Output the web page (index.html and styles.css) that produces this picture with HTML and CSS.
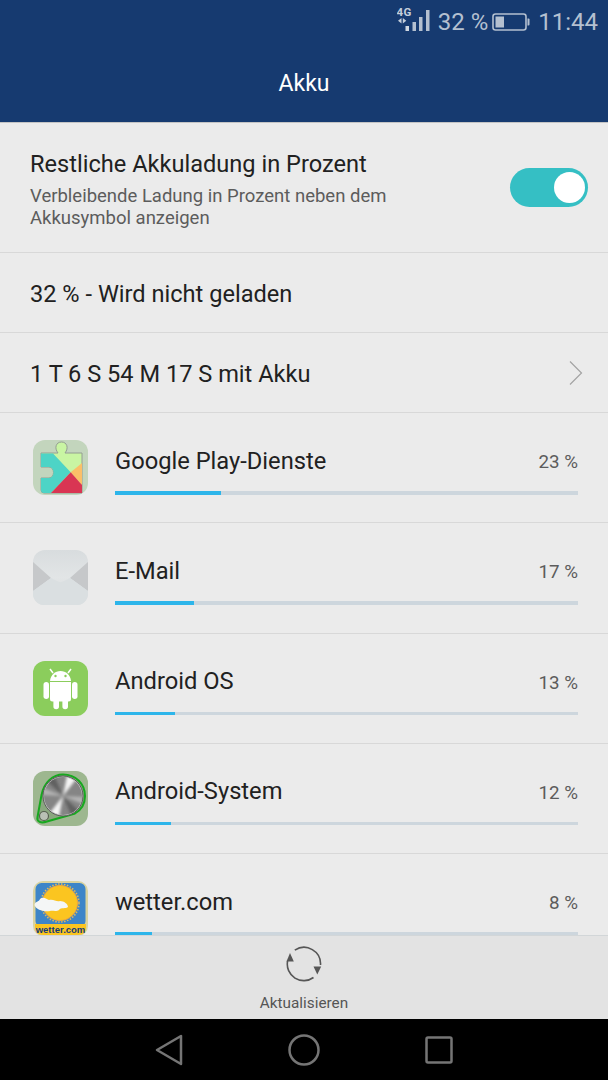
FILE: index.html
```html
<!DOCTYPE html>
<html lang="de">
<head>
<meta charset="utf-8">
<title>Akku</title>
<link rel="stylesheet" href="styles.css">
</head>
<body>
<div class="phone">
  <header class="header">
    <div class="status">
      <svg class="sig" width="34" height="32" viewBox="0 0 34 32">
        <text x="-0.500" y="9.500" class="net">4G</text>
        <path d="M4.500 12 1 14.700 4.500 17.400ZM5.800 12 9.300 14.700 5.800 17.400Z" fill="#c4cedb"/>
        <rect x="8.500" y="20" width="3.500" height="5" fill="#d0d8e2"/>
        <rect x="15.500" y="16" width="3.500" height="9" fill="#b4c0d0"/>
        <rect x="22" y="11" width="3.500" height="14" fill="#b4c0d0"/>
        <rect x="29" y="4" width="3.500" height="21" fill="#b4c0d0"/>
      </svg>
      <span class="pct">32 %</span>
      <svg class="bat" width="38" height="20" viewBox="0 0 38 20">
        <rect x="1" y="2" width="33" height="16" rx="2.500" fill="none" stroke="#b4c0d0" stroke-width="1.600"/>
        <rect x="3.500" y="4.500" width="8.500" height="11" fill="#b4c0d0"/>
        <path d="M35.500 6.500h1a1 1 0 0 1 1 1v5a1 1 0 0 1-1 1h-1Z" fill="#b4c0d0"/>
      </svg>
      <span class="time">11:44</span>
    </div>
    <h1 class="title">Akku</h1>
  </header>

  <main class="content">
    <section class="row row-toggle">
      <div class="toggle-text">
        <div class="main-label">Restliche Akkuladung in Prozent</div>
        <div class="sub-label">Verbleibende Ladung in Prozent neben dem<br>Akkusymbol anzeigen</div>
      </div>
      <div class="toggle"><span class="knob"></span></div>
    </section>
    <section class="row row-plain"><span class="main-label">32 % - Wird nicht geladen</span></section>
    <section class="row row-plain row-link">
      <span class="main-label">1 T 6 S 54 M 17 S mit Akku</span>
      <svg class="chevron" width="16" height="26" viewBox="0 0 16 26"><path d="M2 1.500 13.500 13 2 24.500" fill="none" stroke="#a3a3a3" stroke-width="1.200"/></svg>
    </section>

    <section class="app">
      <svg class="icon" viewBox="0 0 55 55">
        <rect width="55" height="55" rx="12" fill="#c3d5bd"/>
        <path d="M8 13H25C21 8 23 2 28.500 2 34 2 36 8 32 13H49V53H11Q8 53 8 50V38H16C22 38 22 27 16 27H8Z" fill="#c9f5a3" stroke="#949e92" stroke-width="1"/>
        <path d="M8 13.500H20L37.700 32.300 18 53H11Q8 53 8 50V38H16C22 38 22 27 16 27H8Z" fill="#4dd4c6"/>
        <path d="M37.700 32.300 49 23V45Z" fill="#fbbf68"/>
        <path d="M37.700 32.300 49 45V53H18Z" fill="#d93553"/>
      </svg>
      <div class="app-body">
        <div class="app-head"><span class="app-name">Google Play-Dienste</span><span class="app-pct">23 %</span></div>
        <div class="track"><div class="fill" style="width:23%"></div></div>
      </div>
    </section>

    <section class="app">
      <svg class="icon" viewBox="0 0 55 55">
        <defs><linearGradient id="mailg" x1="0" y1="0" x2="0" y2="1"><stop offset="0" stop-color="#d8dcde"/><stop offset=".5" stop-color="#e2e5e6"/><stop offset="1" stop-color="#d2d9dc"/></linearGradient></defs>
        <rect width="55" height="55" rx="12" fill="url(#mailg)"/>
        <path d="M0 12 18 28 0 41ZM55 12 37 28 55 41Z" fill="#c6c8ca"/>
        <path d="M18 28 24 31C26 32.500 29 32.500 31 31L37 28 55 41V44A11 11 0 0 1 44 55H11A11 11 0 0 1 0 44V41Z" fill="#dadfe1"/>
      </svg>
      <div class="app-body">
        <div class="app-head"><span class="app-name">E-Mail</span><span class="app-pct">17 %</span></div>
        <div class="track"><div class="fill" style="width:17%"></div></div>
      </div>
    </section>

    <section class="app">
      <svg class="icon" viewBox="0 0 55 55">
        <rect width="55" height="55" rx="12" fill="#8bcd5c"/>
        <path d="M17 20C17.500 14 22 10 27.500 10S37.500 14 38 20Z" fill="#fff"/>
        <path d="M20 12 17 8M35 12 38 8" stroke="#fff" stroke-width="1.500"/>
        <circle cx="22.500" cy="15" r="1.200" fill="#8bcd5c"/><circle cx="32.500" cy="15" r="1.200" fill="#8bcd5c"/>
        <path d="M17 21H38V38A2.500 2.500 0 0 1 35.500 40.500H35V45.500A2.800 2.800 0 0 1 29.400 45.500V40.500H26V45.500A2.800 2.800 0 0 1 20.400 45.500V40.500H19.500A2.500 2.500 0 0 1 17 38Z" fill="#fff"/>
        <rect x="10.500" y="21" width="5.500" height="17" rx="2.750" fill="#fff"/>
        <rect x="39" y="21" width="5.500" height="17" rx="2.750" fill="#fff"/>
      </svg>
      <div class="app-body">
        <div class="app-head"><span class="app-name">Android OS</span><span class="app-pct">13 %</span></div>
        <div class="track"><div class="fill" style="width:13%"></div></div>
      </div>
    </section>

    <section class="app">
      <svg class="icon" viewBox="0 0 55 55">
        <defs>
          <filter id="soft" x="-30%" y="-30%" width="160%" height="160%"><feGaussianBlur stdDeviation="1.600"/></filter>
          <clipPath id="disc"><circle cx="30" cy="25" r="19"/></clipPath>
        </defs>
        <rect width="55" height="55" rx="12" fill="#9db78f"/>
        <path d="M4.500 46 8.500 24C11 11 20 3.500 30 3.500 43 3.500 52 13 52 25 52 33 48 39 42 42.500L14 50.500C8 52.500 3.500 51 4.500 46Z" fill="#8aa77f" stroke="#17a81f" stroke-width="2"/>
        <circle cx="30" cy="25" r="20" fill="#c9cbc7" stroke="#5a5a5a" stroke-width="1"/>
        <g clip-path="url(#disc)">
          <rect x="10" y="5" width="40" height="40" fill="#858585"/>
          <g filter="url(#soft)">
            <path d="M30 25 34 4 44 7ZM30 25 26 46 16 43Z" fill="#f4f4f4"/>
            <path d="M30 25 52 26 50 33ZM30 25 9 24 10 17Z" fill="#b4b4b4"/>
            <path d="M30 25 14 10 22 6ZM30 25 46 40 38 44Z" fill="#606060"/>
          </g>
        </g>
        <circle cx="11" cy="45" r="4.500" fill="#b9c0b5" stroke="#56604f" stroke-width="1.200"/>
      </svg>
      <div class="app-body">
        <div class="app-head"><span class="app-name">Android-System</span><span class="app-pct">12 %</span></div>
        <div class="track"><div class="fill" style="width:12%"></div></div>
      </div>
    </section>

    <section class="app">
      <svg class="icon" viewBox="0 0 55 55">
        <rect width="55" height="55" rx="10" fill="#d9d3a0"/>
        <rect x="2.500" y="2" width="50" height="44" rx="6" fill="#3d85c8"/>
        <circle cx="27" cy="22" r="19" fill="none" stroke="#e5bb55" stroke-width="1.500" stroke-dasharray="1.500 1.500"/>
        <circle cx="27" cy="22" r="17.500" fill="#fbc520" stroke="#f3a83a" stroke-width="1"/>
        <path d="M1.500 24C2 20 6 21 7 18 10 15 14 18 16 19 21 18 23 21 27 20 31 20 35 23 35 26 33 28 28 26 26 29 23 31 19 29 17 30 11 31 3 29 1.500 24Z" fill="#f4f6f6"/>
        <path d="M2 43H53V46C53 51 50 54 45 54H10C5 54 2 51 2 46Z" fill="#fbc520"/>
        <text x="27.500" y="51.500" class="wetter">wetter.com</text>
      </svg>
      <div class="app-body">
        <div class="app-head"><span class="app-name">wetter.com</span><span class="app-pct">8 %</span></div>
        <div class="track"><div class="fill" style="width:8%"></div></div>
      </div>
    </section>
  </main>

  <footer class="footer">
    <svg width="36" height="36" viewBox="0 0 36 36" fill="none">
      <path d="M8.800 4.200A16.500 16.500 0 0 1 34.500 19" stroke="#565656" stroke-width="1.600"/>
      <path d="M1.600 15A16.500 16.500 0 0 0 27.500 31.500" stroke="#565656" stroke-width="1.600"/>
      <path d="M4 7 0.500 15.500H7.800Z" fill="#565656"/>
      <path d="M31.300 28.500 27.500 20.500H35.200Z" fill="#565656"/>
    </svg>
    <span class="footer-label">Aktualisieren</span>
  </footer>

  <nav class="nav">
    <svg width="28" height="32" viewBox="0 0 28 32"><path d="M26 2V30L2 16Z" fill="none" stroke="#757575" stroke-width="2.500" stroke-linejoin="round"/></svg>
    <svg width="32" height="32" viewBox="0 0 32 32"><circle cx="16" cy="16" r="14.500" fill="none" stroke="#757575" stroke-width="2.500"/></svg>
    <svg width="28" height="28" viewBox="0 0 28 28"><rect x="1.500" y="1.500" width="25" height="25" rx="1.500" fill="none" stroke="#757575" stroke-width="2.500"/></svg>
  </nav>
</div>
</body>
</html>
```
FILE: styles.css
```css
* { box-sizing: border-box; }
html, body { margin: 0; padding: 0; }
body { font-family: Roboto, "Noto Sans", sans-serif; background: #ebebeb; }
.phone { width: 608px; height: 1080px; display: flex; flex-direction: column; overflow: hidden; }

.header { height: 123px; flex: none; background: #163a70; border-bottom: 1px solid #c4c4c4; display: flex; flex-direction: column; }
.status { height: 42px; display: flex; align-items: center; justify-content: flex-end; padding: 2px 10px 0 0; color: #b4c0d0; font-size: 24px; }
.sig { margin-right: 7px; }
.net { font: 700 11.500px Roboto, sans-serif; fill: #c4cedb; letter-spacing: .5px; }
.pct { margin-right: 4px; }
.bat { margin-right: 8px; }
.title { margin: 0; flex: 1; display: flex; align-items: center; justify-content: center; padding-top: 2px; color: #fff; font-size: 23px; font-weight: 400; }

.content { flex: 1; min-height: 0; overflow: hidden; }
.row { border-bottom: 1px solid #d8d8d8; display: flex; align-items: center; padding: 3px 20px 0 30px; }
.row-toggle { height: 130px; justify-content: space-between; }
.row-plain { height: 80px; }
.row-link { justify-content: space-between; padding-right: 24px; }
.chevron { margin-top: -3px; }
.main-label { font-size: 23.600px; color: #212121; line-height: 30px; }
.sub-label { font-size: 18.500px; color: #5c5c5c; line-height: 22px; margin-top: 6px; }
.toggle { width: 78px; height: 39px; border-radius: 20px; background: #35bfc4; display: flex; align-items: center; justify-content: flex-end; padding-right: 3px; margin-top: -3px; }
.knob { width: 31px; height: 31px; border-radius: 50%; background: #fff; }

.app { height: 110.250px; border-bottom: 1px solid #d8d8d8; display: flex; align-items: flex-start; padding: 27px 30px 0 33px; }
.icon { width: 55px; height: 55px; flex: none; margin-right: 27px; }
.app-body { flex: 1; }
.app-head { display: flex; justify-content: space-between; align-items: center; height: 40px; }
.app-name { font-size: 23.700px; color: #212121; padding-top: 1px; }
.app-pct { font-size: 18.800px; color: #5c5c5c; padding-top: 4px; }
.track { height: 3.500px; margin-top: 11px; background: #cdd6dd; }
.fill { height: 100%; background: #2db5ea; }

.footer { height: 84px; flex: none; background: #e3e3e3; border-top: 1px solid #d2d6d8; display: flex; flex-direction: column; align-items: center; padding-top: 10px; }
.footer-label { font-size: 15.300px; color: #555; margin-top: 12px; }

.nav { height: 61px; flex: none; background: #000; display: flex; justify-content: center; align-items: center; gap: 105px; }

.wetter { font: 700 9.500px "Liberation Sans", sans-serif; fill: #123a7a; text-anchor: middle; }
```
